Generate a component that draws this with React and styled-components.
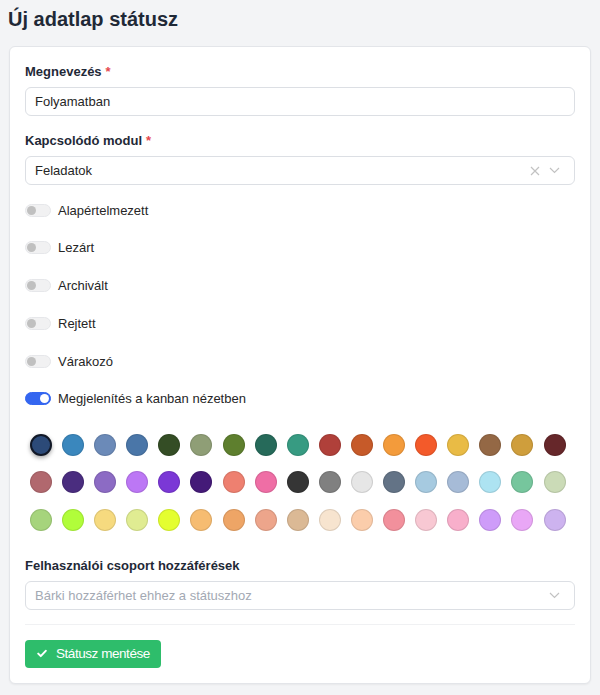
import React, { useState } from "react";
import styled, { createGlobalStyle, css } from "styled-components";

const GlobalStyle = createGlobalStyle`
  html, body { margin: 0; padding: 0; background: #f3f4f6; }
  body {
    font-family: "Liberation Sans", Arial, Helvetica, sans-serif;
    color: #1f2937;
    -webkit-font-smoothing: antialiased;
  }
  * { box-sizing: border-box; }
`;

const Page = styled.div`
  padding: 4px 9px 11px 8px;
`;

const Title = styled.h1`
  margin: 0 0 12px;
  font-size: 20px;
  line-height: 30px;
  font-weight: 700;
  color: #1f2937;
`;

const Card = styled.section`
  margin-left: 1px;
  background: #fff;
  border: 1px solid #e3e5e9;
  border-radius: 6px;
  box-shadow: 0 1px 2px rgba(0, 0, 0, 0.05);
  padding: 15px;
  display: flex;
  flex-direction: column;
`;

const Field = styled.div`
  display: flex;
  flex-direction: column;
  gap: 5px;
  margin-bottom: ${(p) => p.$mb ?? 15}px;
`;

const Label = styled.label`
  font-size: 13px;
  line-height: 20px;
  font-weight: 700;
  color: #1f2937;
`;

const Req = styled.span`
  color: #e5484d;
  margin-left: 4px;
`;

const Box = styled.div`
  height: 29px;
  border: 1px solid #dcdfe4;
  border-radius: 6px;
  padding: 0 14px 0 9px;
  display: flex;
  align-items: center;
  font-size: 13px;
  color: ${(p) => (p.$placeholder ? "#a3a9b3" : "#262626")};
  background: #fff;
`;

const BoxText = styled.span`
  flex: 1;
`;

const Icons = styled.span`
  display: flex;
  align-items: center;
  gap: 9px;
  color: #c2c2c2;
`;

const ToggleList = styled.div`
  display: flex;
  flex-direction: column;
  gap: 17.8px;
  margin-bottom: 25px;
`;

const ToggleRow = styled.div`
  display: flex;
  align-items: center;
  height: 20px;
  gap: 7px;
  font-size: 13px;
  color: #262626;
`;

const Track = styled.span`
  position: relative;
  width: 26px;
  height: 13px;
  border-radius: 7px;
  background: ${(p) => (p.$on ? "#3466f0" : "#f1f1f2")};
  border: 1px solid ${(p) => (p.$on ? "#3466f0" : "#e6e7ea")};
  flex: none;
`;

const Knob = styled.span`
  position: absolute;
  top: 1px;
  width: 9px;
  height: 9px;
  border-radius: 50%;
  background: ${(p) => (p.$on ? "#fff" : "#c0c0c0")};
  ${(p) =>
    p.$on
      ? css`
          right: 1px;
        `
      : css`
          left: 1px;
        `}
`;

const Palette = styled.div`
  display: grid;
  grid-template-columns: repeat(17, 32.1px);
  row-gap: 15.5px;
  padding-left: 5px;
  margin-bottom: 25px;
`;

const Swatch = styled.span`
  width: 22px;
  height: 22px;
  border-radius: 50%;
  background: ${(p) => p.$c};
  box-shadow: inset 0 0 0 1px rgba(0, 0, 0, 0.1);
  ${(p) =>
    p.$active &&
    css`
      border: 2px solid #111827;
      box-shadow: 0 2px 4px rgba(0, 0, 0, 0.35);
    `}
`;

const Divider = styled.hr`
  border: none;
  border-top: 1px solid #f0f1f3;
  margin: 0 0 15px;
`;

const SaveButton = styled.button`
  align-self: flex-start;
  display: flex;
  align-items: center;
  gap: 9px;
  height: 28px;
  padding: 0 11px 0 12px;
  border: none;
  border-radius: 4px;
  background: #2ebd6b;
  color: #fff;
  font-family: inherit;
  font-size: 13.5px;
  letter-spacing: -0.45px;
  cursor: pointer;
`;

const colors = [
  "#2c4a78", "#3a87bd", "#6b8ab8", "#4a76a8", "#344d25", "#8f9e76", "#5e7f2e", "#266a5a", "#379b82",
  "#b0403a", "#c65a29", "#f39b3b", "#f35a2a", "#e9bb45", "#946845", "#cf9e3c", "#66272a",
  "#b1686e", "#4a2d7f", "#8c6bc4", "#bc77f5", "#7b38d6", "#441a78", "#ee8070", "#ef6ea5", "#353535",
  "#808080", "#e6e6e6", "#637386", "#a6cae0", "#a6bbd7", "#ade3f2", "#76c69d", "#cbdbb7",
  "#a6d47c", "#b1fd3a", "#f6da7f", "#e0ec92", "#e4fe30", "#f6bc71", "#eea566", "#eda58b", "#dbb995",
  "#f7e4cf", "#fbcdab", "#f2909c", "#f8c8d3", "#f8afcb", "#ce9cf9", "#e9a7f6", "#cdb3ef",
];

const toggles = [
  ["Alapértelmezett", false],
  ["Lezárt", false],
  ["Archivált", false],
  ["Rejtett", false],
  ["Várakozó", false],
  ["Megjelenítés a kanban nézetben", true],
];

const Chevron = () => (
  <svg width="11" height="7" viewBox="0 0 11 7" fill="none" stroke="currentColor" strokeWidth="1.2">
    <path d="M1 1l4.5 4.5L10 1" />
  </svg>
);

const Cross = () => (
  <svg width="10" height="10" viewBox="0 0 10 10" fill="none" stroke="currentColor" strokeWidth="1.2">
    <path d="M1 1l8 8M9 1l-8 8" />
  </svg>
);

const Check = () => (
  <svg width="10" height="9" viewBox="0 0 12 10" fill="none" stroke="#fff" strokeWidth="2.4" strokeLinecap="round" strokeLinejoin="round">
    <path d="M1.5 5.2l3 3L10.5 1.8" />
  </svg>
);

export default function App() {
  const [active, setActive] = useState(0);
  return (
    <Page>
      <GlobalStyle />
      <Title>Új adatlap státusz</Title>
      <Card>
        <Field>
          <Label>
            Megnevezés<Req>*</Req>
          </Label>
          <Box>
            <BoxText>Folyamatban</BoxText>
          </Box>
        </Field>
        <Field $mb={15}>
          <Label>
            Kapcsolódó modul<Req>*</Req>
          </Label>
          <Box>
            <BoxText>Feladatok</BoxText>
            <Icons>
              <Cross />
              <Chevron />
            </Icons>
          </Box>
        </Field>
        <ToggleList>
          {toggles.map(([label, on]) => (
            <ToggleRow key={label}>
              <Track $on={on}>
                <Knob $on={on} />
              </Track>
              {label}
            </ToggleRow>
          ))}
        </ToggleList>
        <Palette>
          {colors.map((c, i) => (
            <Swatch key={c + i} $c={c} $active={i === active} onClick={() => setActive(i)} />
          ))}
        </Palette>
        <Field $mb={14}>
          <Label>Felhasználói csoport hozzáférések</Label>
          <Box $placeholder>
            <BoxText>Bárki hozzáférhet ehhez a státuszhoz</BoxText>
            <Icons>
              <Chevron />
            </Icons>
          </Box>
        </Field>
        <Divider />
        <SaveButton>
          <Check />
          Státusz mentése
        </SaveButton>
      </Card>
    </Page>
  );
}
